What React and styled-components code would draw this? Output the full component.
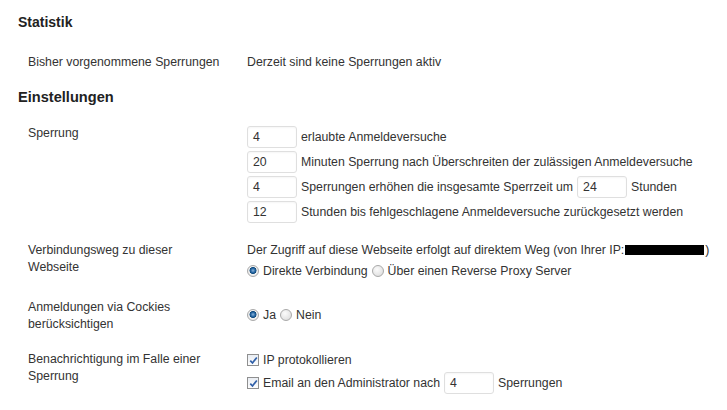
import React from 'react';
import styled, { createGlobalStyle } from 'styled-components';

const GlobalStyle = createGlobalStyle`
  html, body {
    margin: 0;
    padding: 0;
    background: #fff;
  }
  body {
    font-family: "Liberation Sans", Arial, sans-serif;
    font-size: 12.3px;
    color: #333;
  }
`;

const Page = styled.div`
  padding: 14px 0 0 18px;
  width: 709px;
  height: 396px;
  overflow: hidden;
`;

const Heading = styled.h3`
  margin: ${p => p.$top || 0}px 0 0 0;
  font-size: ${p => p.$size || 14}px;
  line-height: ${p => p.$lh || 16}px;
  font-weight: bold;
  color: #222;
`;

const Row = styled.div`
  display: grid;
  grid-template-columns: 219px 1fr;
  margin: ${p => p.$top || 0}px 0 0 10px;
  align-items: start;
`;

const Label = styled.div`
  line-height: 17.5px;
  width: 194px;
`;

const Value = styled.div`
  display: flex;
  flex-direction: column;
  gap: ${p => p.$gap || 0}px;
  padding-top: ${p => p.$pad || 0}px;
`;

const Line = styled.div`
  display: flex;
  align-items: center;
  gap: ${p => (p.$gap === undefined ? 4 : p.$gap)}px;
  height: ${p => p.$h || 17}px;
  white-space: nowrap;
`;

const Field = styled.div`
  box-sizing: border-box;
  width: 50px;
  height: 22px;
  border: 1px solid #dfdfdf;
  border-radius: 3px;
  box-shadow: inset 0 1px 2px rgba(0, 0, 0, 0.04);
  background: #fff;
  padding: 0 0 0 5px;
  line-height: 20px;
  color: #333;
`;

const Redacted = styled.span`
  display: inline-block;
  width: 79px;
  height: 10px;
  background: #000;
  margin: 0 1px 0 1px;
  vertical-align: -1px;
`;

const RadioDot = styled.span`
  box-sizing: border-box;
  flex: none;
  width: 12px;
  height: 12px;
  border-radius: 50%;
  border: 1px solid #a9a9a9;
  background: ${p =>
    p.$checked
      ? 'radial-gradient(circle at 50% 45%, #8fb6d8 0, #2a6aa8 2px, #114b7c 3.2px, #f2f2f2 3.8px, #e2e2e2 100%)'
      : 'radial-gradient(circle at 40% 35%, #fbfbfb 0, #e6e6e6 60%, #d4d4d4 100%)'};
`;

const CheckBox = styled.span`
  box-sizing: border-box;
  flex: none;
  width: 12px;
  height: 12px;
  border: 1px solid #8f8f8f;
  background: linear-gradient(#e9edf3, #fdfdfd);
  display: flex;
  align-items: center;
  justify-content: center;
`;

const Option = styled.span`
  display: inline-flex;
  align-items: center;
  gap: 4px;
`;

function Radio({ checked, children }) {
  return (
    <Option>
      <RadioDot $checked={checked} />
      {children}
    </Option>
  );
}

function Check({ children }) {
  return (
    <Option>
      <CheckBox>
        <svg width="9" height="9" viewBox="0 0 9 9">
          <path d="M1.3 4.6 L3.5 7 L7.8 1.4" fill="none" stroke="#2f5fa8" strokeWidth="1.7" />
        </svg>
      </CheckBox>
      {children}
    </Option>
  );
}

export default function App() {
  return (
    <>
      <GlobalStyle />
      <Page>
        <Heading $size={14} $lh={16}>Statistik</Heading>

        <Row $top={23.5}>
          <Label>Bisher vorgenommene Sperrungen</Label>
          <Value>
            <Line>Derzeit sind keine Sperrungen aktiv</Line>
          </Value>
        </Row>

        <Heading $size={14.6} $lh={18} $top={16.5}>Einstellungen</Heading>

        <Row $top={19.5}>
          <Label>Sperrung</Label>
          <Value $gap={3.3} $pad={0.5}>
            <Line $h={22}>
              <Field>4</Field>
              <span>erlaubte Anmeldeversuche</span>
            </Line>
            <Line $h={22}>
              <Field>20</Field>
              <span>Minuten Sperrung nach Überschreiten der zulässigen Anmeldeversuche</span>
            </Line>
            <Line $h={22}>
              <Field>4</Field>
              <span>Sperrungen erhöhen die insgesamte Sperrzeit um</span>
              <Field>24</Field>
              <span>Stunden</span>
            </Line>
            <Line $h={22}>
              <Field>12</Field>
              <span>Stunden bis fehlgeschlagene Anmeldeversuche zurückgesetzt werden</span>
            </Line>
          </Value>
        </Row>

        <Row $top={18.5}>
          <Label>Verbindungsweg zu dieser Webseite</Label>
          <Value $gap={4}>
            <Line $gap={0}>
              <span>Der Zugriff auf diese Webseite erfolgt auf direktem Weg (von Ihrer IP:</span>
              <Redacted />
              <span>)</span>
            </Line>
            <Line>
              <Radio checked>Direkte Verbindung</Radio>
              <Radio>Über einen Reverse Proxy Server</Radio>
            </Line>
          </Value>
        </Row>

        <Row $top={19}>
          <Label>Anmeldungen via Cockies berücksichtigen</Label>
          <Value $pad={8}>
            <Line>
              <Radio checked>Ja</Radio>
              <Radio>Nein</Radio>
            </Line>
          </Value>
        </Row>

        <Row $top={17}>
          <Label>Benachrichtigung im Falle einer Sperrung</Label>
          <Value $pad={1} $gap={3.5}>
            <Line>
              <Check>IP protokollieren</Check>
            </Line>
            <Line $h={22}>
              <Check>Email an den Administrator nach</Check>
              <Field>4</Field>
              <span>Sperrungen</span>
            </Line>
          </Value>
        </Row>
      </Page>
    </>
  );
}
